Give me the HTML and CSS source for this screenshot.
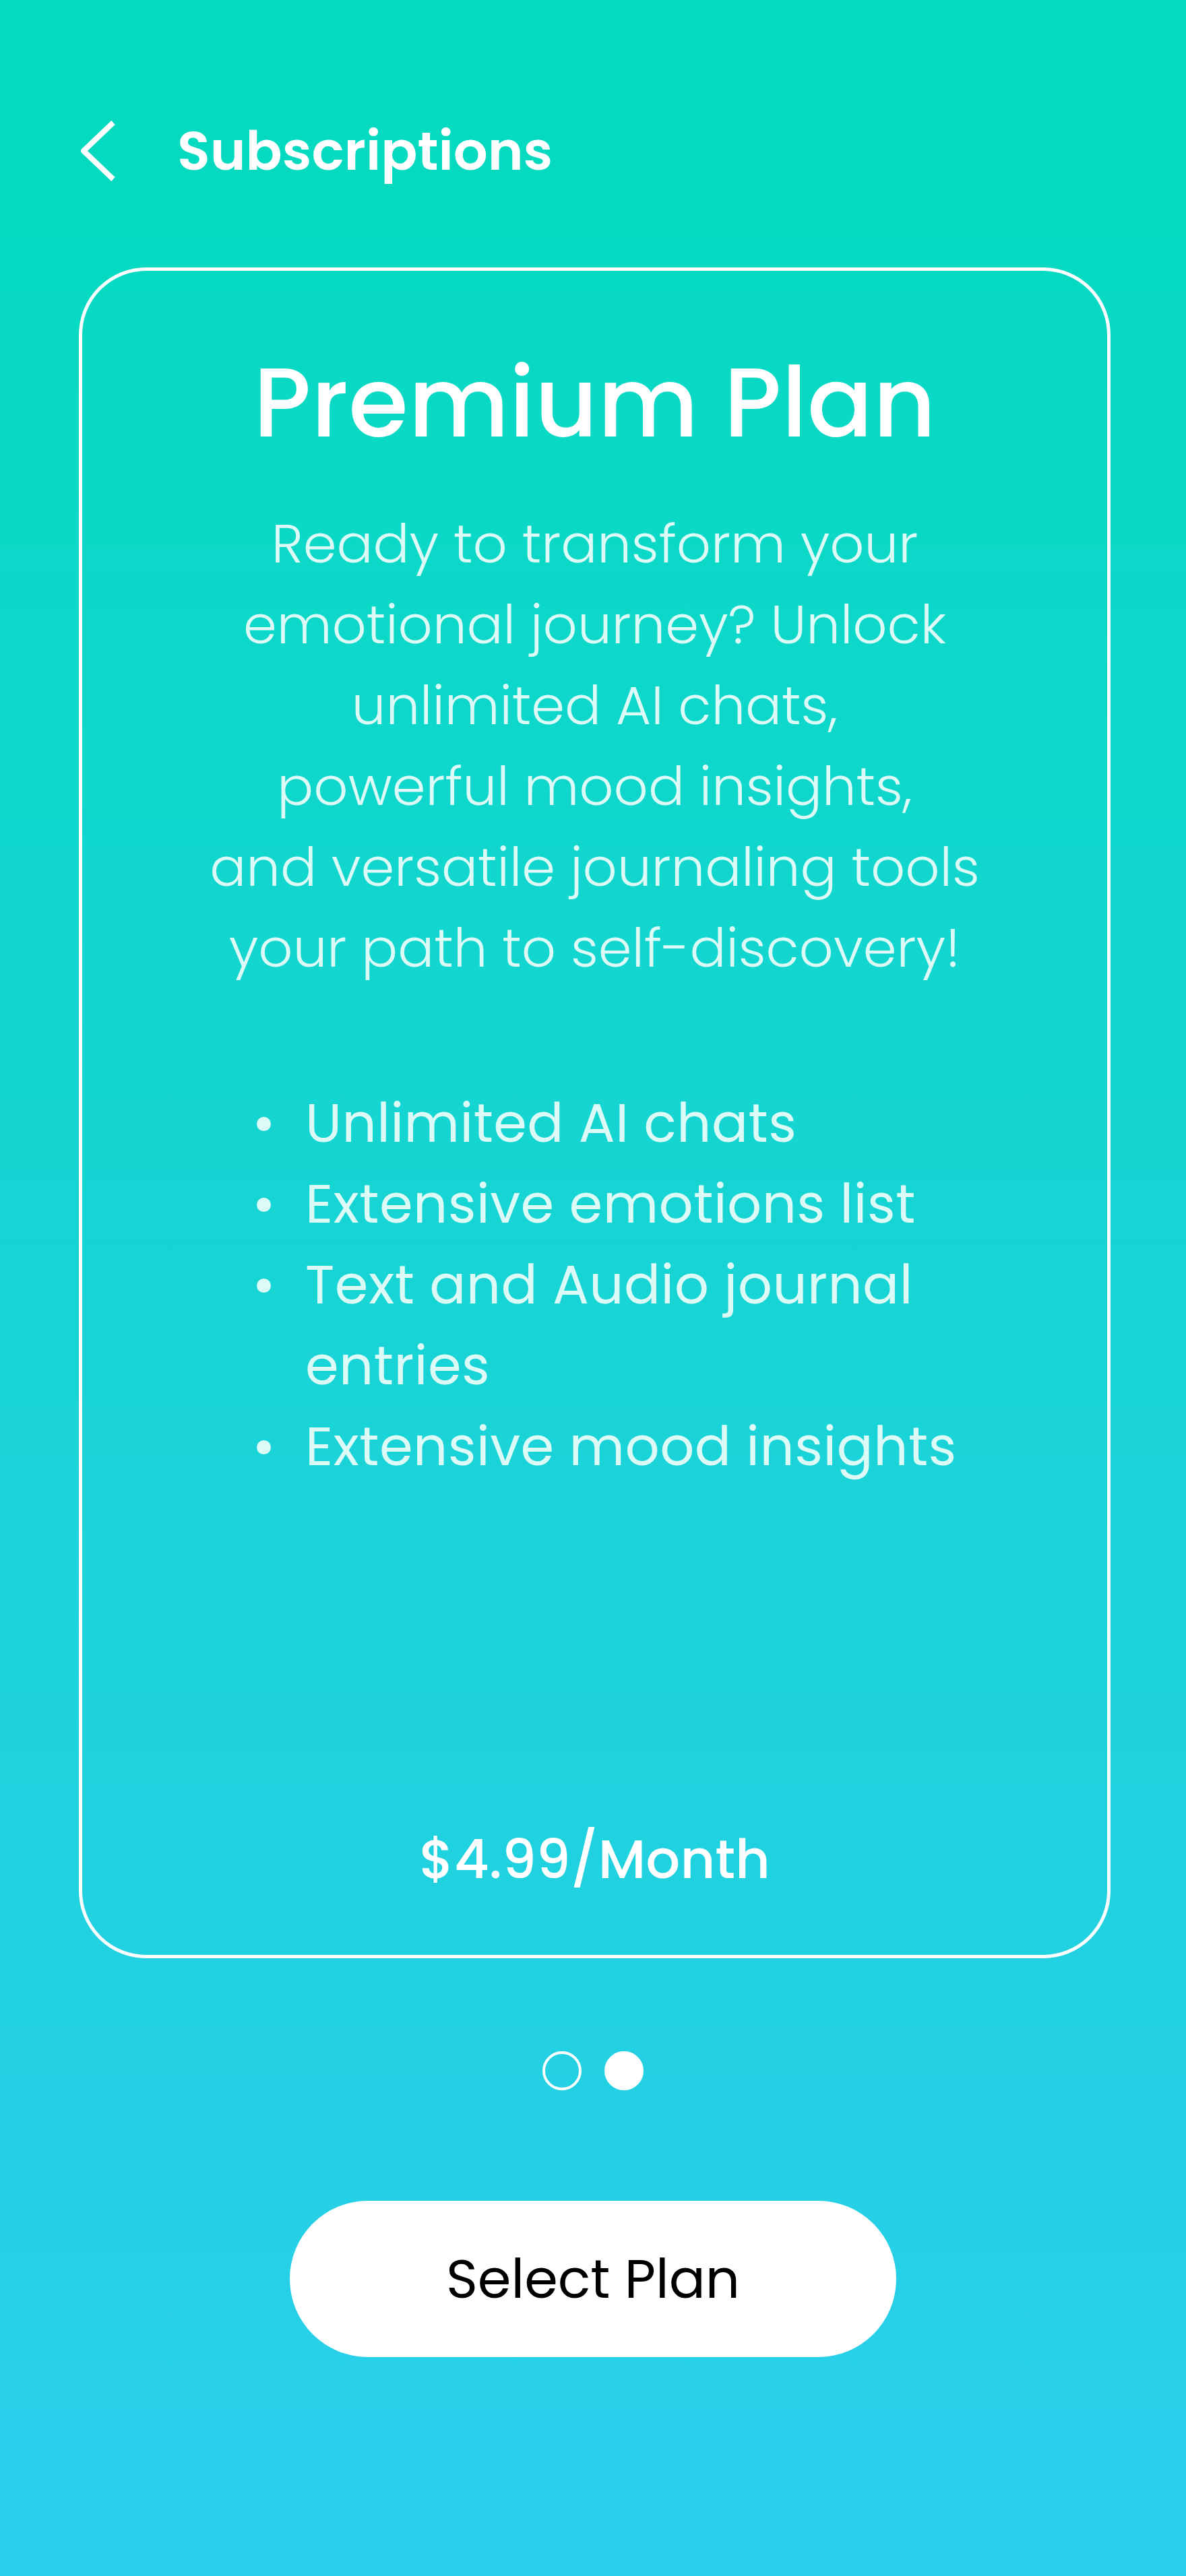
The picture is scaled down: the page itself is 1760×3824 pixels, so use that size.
FILE: index.html
```html
<!DOCTYPE html>
<html lang="en">
<head>
<meta charset="utf-8">
<title>Subscriptions</title>
<link rel="stylesheet" href="styles.css">
</head>
<body>
<div class="screen">
  <header class="topbar">
    <svg class="back" width="60" height="100" viewBox="0 0 60 100" aria-hidden="true">
      <polyline points="53,8 9,50 53,92" fill="none" stroke="#fff" stroke-width="8" stroke-linecap="butt" stroke-linejoin="round"/>
    </svg>
    <h1 class="topbar-title">Subscriptions</h1>
  </header>

  <section class="card">
    <h2 class="plan-title">Premium Plan</h2>
    <p class="plan-desc">Ready to transform your<br>emotional journey? Unlock<br>unlimited AI chats,<br>powerful mood insights,<br>and versatile journaling tools<br>your path to self-discovery!</p>
    <ul class="features">
      <li>Unlimited AI chats</li>
      <li>Extensive emotions list</li>
      <li>Text and Audio journal entries</li>
      <li>Extensive mood insights</li>
    </ul>
    <div class="price">$4.99/Month</div>
  </section>

  <div class="dots">
    <span class="dot"></span>
    <span class="dot active"></span>
  </div>

  <div class="actions">
    <button class="select-btn">Select Plan</button>
  </div>
</div>
</body>
</html>
```

FILE: styles.css
```css
* { box-sizing: border-box; }
html, body { margin: 0; padding: 0; }
body {
  font-family: "Poppins", "Inter", "Noto Sans", sans-serif;
  color: #fff;
}
.screen {
  width: 1760px;
  min-height: 3824px;
  background: linear-gradient(180deg, #02dbbd 0%, #17d4d5 50%, #2bcfed 100%);
  display: flex;
  flex-direction: column;
}
.topbar {
  display: flex;
  align-items: flex-start;
  padding: 174px 0 0 115px;
  height: 397px;
}
.back { display: block; }
.topbar-title {
  margin: 8px 0 0 88px;
  font-size: 80px;
  font-weight: 600;
  line-height: 84px;
}
.card {
  margin-left: 117px;
  width: 1531px;
  height: 2510px;
  border: 5px solid #fff;
  border-radius: 100px;
  display: flex;
  flex-direction: column;
  align-items: center;
  padding: 116px 60px 0;
}
.plan-title {
  margin: 0;
  font-size: 144px;
  font-weight: 500;
  line-height: 160px;
}
.plan-desc {
  margin: 69px 0 0;
  text-align: center;
  font-size: 80px;
  font-weight: 300;
  line-height: 120px;
  color: #dcfaf6;
}
.features {
  align-self: flex-start;
  margin: 140px 0 0 199px;
  padding: 0;
  width: 1090px;
  list-style: none;
  color: #dcfaf6;
  font-size: 80px;
  font-weight: 400;
  letter-spacing: 0.5px;
  line-height: 120px;
}
.features li {
  position: relative;
  padding-left: 72px;
}
.features li::before {
  content: "";
  position: absolute;
  left: 0;
  top: 51px;
  width: 21px;
  height: 21px;
  border-radius: 50%;
  background: #dcfaf6;
}
.price {
  margin-top: auto;
  margin-bottom: 82px;
  font-size: 80px;
  font-weight: 500;
  line-height: 120px;
}
.dots {
  display: flex;
  justify-content: center;
  gap: 34px;
  margin-top: 138px;
}
.dot {
  width: 58px;
  height: 58px;
  border-radius: 50%;
  border: 4px solid #fff;
}
.dot.active { background: #fff; }
.actions {
  display: flex;
  justify-content: center;
  margin-top: 164px;
}
.select-btn {
  width: 900px;
  height: 232px;
  border: none;
  border-radius: 116px;
  background: #fff;
  color: #000;
  font-family: inherit;
  font-size: 80px;
  font-weight: 400;
}
```
